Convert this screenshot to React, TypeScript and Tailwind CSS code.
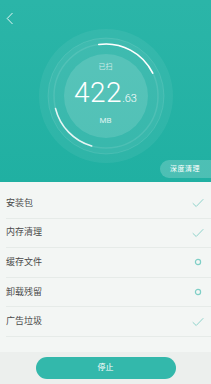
import type React from 'react';

type Status = 'done' | 'running';

const ITEMS: { label: string; status: Status }[] = [
  { label: '安装包', status: 'done' },
  { label: '内存清理', status: 'done' },
  { label: '缓存文件', status: 'running' },
  { label: '卸载残留', status: 'running' },
  { label: '广告垃圾', status: 'done' },
];

const polar = (cx: number, cy: number, r: number, deg: number) => {
  const a = (deg * Math.PI) / 180;
  return [cx + r * Math.sin(a), cy - r * Math.cos(a)];
};

const arc = (cx: number, cy: number, r: number, from: number, to: number) => {
  const [x1, y1] = polar(cx, cy, r, from);
  const [x2, y2] = polar(cx, cy, r, to);
  const large = to - from > 180 ? 1 : 0;
  return `M ${x1} ${y1} A ${r} ${r} 0 ${large} 1 ${x2} ${y2}`;
};

const Gauge: React.FC = () => (
  <div className="relative mx-auto h-[140px] w-[140px]">
    <svg width="140" height="140" viewBox="0 0 140 140" className="absolute inset-0">
      <circle cx="70" cy="70" r="67" fill="rgba(255,255,255,0.06)" />
      <circle cx="70" cy="70" r="58" fill="rgba(255,255,255,0.05)" stroke="rgba(255,255,255,0.12)" strokeWidth="0.8" />
      <circle cx="70" cy="70" r="52" fill="none" stroke="rgba(255,255,255,0.1)" strokeWidth="1.5" />
      <path d={arc(70, 70, 52, -8, 64)} fill="none" stroke="#ffffff" strokeWidth="1.6" strokeLinecap="round" />
      <path d={arc(70, 70, 52, 196, 256)} fill="none" stroke="rgba(255,255,255,0.85)" strokeWidth="1.6" strokeLinecap="round" />
      <circle cx="70" cy="70" r="42" fill="rgba(255,255,255,0.13)" />
    </svg>
    <div className="absolute inset-0 flex flex-col items-center justify-center text-white">
      <span className="mt-[-4px] text-[7px] leading-none text-white/70">已扫</span>
      <div className="mt-[8px] flex items-baseline leading-none">
        <span className="text-[28px] font-light tracking-[0.5px]">422</span>
        <span className="text-[11px] font-light">.63</span>
      </div>
      <span className="mt-[10px] text-[8px] leading-none text-white/80">MB</span>
    </div>
  </div>
);

const Check: React.FC = () => (
  <svg width="12" height="10" viewBox="0 0 12 10">
    <path d="M1 5.5 L4.2 8.5 L11 1.5" fill="none" stroke="#8fd3cb" strokeWidth="1" strokeLinecap="round" strokeLinejoin="round" />
  </svg>
);

const Spinner: React.FC = () => (
  <svg width="8" height="8" viewBox="0 0 8 8">
    <circle cx="4" cy="4" r="2.6" fill="none" stroke="#7fcfc6" strokeWidth="1.2" />
  </svg>
);

export default function App() {
  return (
    <div
      className="flex h-[384px] w-[211px] flex-col overflow-hidden bg-[#f3f6f4]"
      style={{ fontFamily: 'Roboto, "Noto Sans CJK SC", sans-serif' }}
    >
      <div className="flex flex-col overflow-hidden bg-gradient-to-b from-[#2bb5a8] to-[#20b0a2] pb-[4px] pt-[12px]">
        <div className="flex h-[13px] items-center pl-[6px]">
          <svg width="8" height="13" viewBox="0 0 8 13">
            <path d="M6.5 1 L1.2 6.5 L6.5 12" fill="none" stroke="rgba(255,255,255,0.85)" strokeWidth="1" />
          </svg>
        </div>
        <div className="mt-[1px]">
          <Gauge />
        </div>
        <div className="-mr-[10px] mt-[-6px] flex h-[18px] w-[61px] items-center self-end rounded-full bg-white/20 pl-[10px]">
          <span className="text-[7px] leading-none tracking-[0.5px] text-white">深度清理</span>
        </div>
      </div>

      <div className="flex flex-col pt-[7px]">
        {ITEMS.map(item => (
          <div key={item.label} className="ml-[6px] flex h-[29.6px] items-center justify-between border-b border-[#e6ebe8] pr-[7px]">
            <span className="text-[9px] leading-none text-[#4a4a4a]">{item.label}</span>
            <div className="flex w-[12px] justify-center">{item.status === 'done' ? <Check /> : <Spinner />}</div>
          </div>
        ))}
      </div>

      <div className="mt-auto flex h-[32px] items-center justify-center bg-[#ecefed]">
        <button type="button" className="flex h-[22px] w-[140px] items-center justify-center rounded-full bg-[#33b8ab]">
          <span className="text-[8px] leading-none text-white">停止</span>
        </button>
      </div>
    </div>
  );
}
